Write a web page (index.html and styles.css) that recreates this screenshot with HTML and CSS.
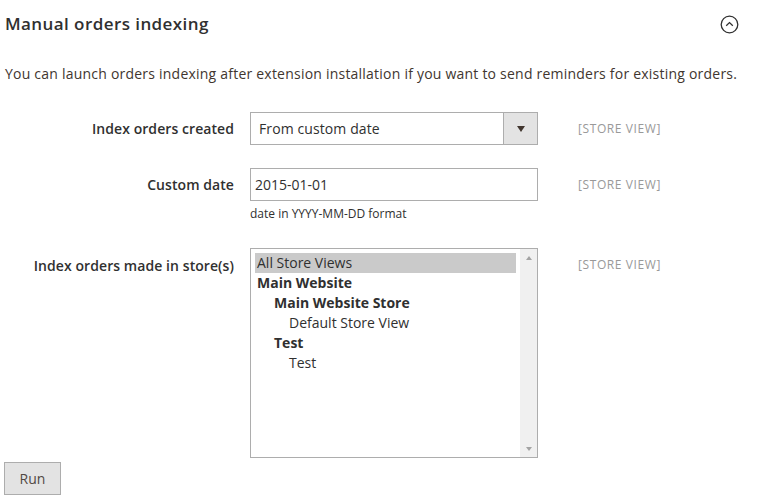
FILE: index.html
```html
<!DOCTYPE html>
<html>
<head>
<meta charset="utf-8">
<link rel="stylesheet" href="styles.css">
</head>
<body>
<div class="page">
  <div class="section-header">
    <h2 class="title">Manual orders indexing</h2>
    <span class="collapse-icon">
      <svg width="19" height="19" viewBox="0 0 19 19"><circle cx="9.5" cy="9.5" r="8.3" fill="none" stroke="#303030" stroke-width="1.3"/><path d="M6.2 10.8 L9.5 7.6 L12.8 10.8" fill="none" stroke="#303030" stroke-width="1.3"/></svg>
    </span>
  </div>
  <p class="desc">You can launch orders indexing after extension installation if you want to send reminders for existing orders.</p>

  <div class="form">
    <div class="row">
      <div class="label">Index orders created</div>
      <div class="control">
        <div class="select">
          <span class="select-value">From custom date</span>
          <span class="select-btn"><span class="tri-down"></span></span>
        </div>
      </div>
      <div class="scope">[STORE VIEW]</div>
    </div>

    <div class="row row-date">
      <div class="label">Custom date</div>
      <div class="control">
        <div class="input">2015-01-01</div>
        <div class="note">date in YYYY-MM-DD format</div>
      </div>
      <div class="scope">[STORE VIEW]</div>
    </div>

    <div class="row row-stores">
      <div class="label">Index orders made in store(s)</div>
      <div class="control">
        <div class="multiselect">
          <div class="options">
            <div class="opt selected">All Store Views</div>
            <div class="opt group">Main Website</div>
            <div class="opt group lvl1">Main Website Store</div>
            <div class="opt lvl2">Default Store View</div>
            <div class="opt group lvl1">Test</div>
            <div class="opt lvl2">Test</div>
          </div>
          <div class="scrollbar">
            <span class="sb-up"></span>
            <span class="sb-down"></span>
          </div>
        </div>
      </div>
      <div class="scope">[STORE VIEW]</div>
    </div>
  </div>

  <button class="run-btn">Run</button>
</div>
</body>
</html>
```

FILE: styles.css
```css
* { box-sizing: border-box; }
html, body { margin: 0; padding: 0; background: #fff; }
body {
  font-family: "Open Sans", "DejaVu Sans", sans-serif;
  color: #303030;
  font-size: 14px;
}
.page { width: 770px; height: 500px; overflow: hidden; }
.section-header {
  display: flex;
  justify-content: space-between;
  align-items: center;
  padding: 14px 31px 0 5px;
  height: 34px;
}
.title {
  margin: 0;
  font-size: 17px;
  font-weight: 600;
  line-height: 20px;
  letter-spacing: 0.025em;
  color: #303030;
}
.collapse-icon { display: flex; width: 19px; height: 19px; }
.desc {
  margin: 30px 0 0 5px;
  line-height: 20px;
  font-size: 14px;
  letter-spacing: 0.22px;
  color: #41362f;
  white-space: nowrap;
}
.form { margin-top: 28px; }
.row { display: flex; align-items: flex-start; }
.row-date { margin-top: 23px; }
.row-stores { margin-top: 26px; }
.label {
  width: 234px;
  margin-right: 16px;
  text-align: right;
  padding-top: 7px;
  line-height: 19px;
  font-weight: 600;
  letter-spacing: 0.07px;
  font-size: 14px;
  color: #303030;
}
.row-stores .label { padding-top: 8px; }
.control { width: 288px; }
.scope {
  margin-left: 40px;
  padding-top: 8px;
  line-height: 18px;
  font-size: 12px;
  letter-spacing: 0.6px;
  color: #999;
}
.select {
  display: flex;
  height: 33px;
  border: 1px solid #adadad;
  background: #fff;
}
.select-value {
  flex: 1;
  padding-left: 8px;
  line-height: 31px;
  letter-spacing: 0.1px;
  color: #303030;
}
.select-btn {
  width: 34px;
  border-left: 1px solid #adadad;
  background: #e3e3e3;
  display: flex;
  align-items: center;
  justify-content: center;
}
.tri-down {
  width: 0; height: 0;
  border-left: 4.5px solid transparent;
  border-right: 4.5px solid transparent;
  border-top: 6px solid #41362f;
  margin-left: 1px;
}
.input {
  height: 33px;
  border: 1px solid #adadad;
  padding-left: 4px;
  line-height: 31px;
  color: #303030;
}
.note {
  margin-top: 5px;
  font-size: 12px;
  line-height: 16px;
  color: #303030;
}
.multiselect {
  display: flex;
  height: 210px;
  border: 1px solid #adadad;
  background: #fff;
}
.options {
  flex: 1;
  padding: 4px 4px 0 4px;
}
.opt {
  height: 20px;
  line-height: 20px;
  padding-left: 2px;
  color: #303030;
}
.opt.selected { background: #cacaca; }
.opt.group { font-weight: 700; }
.lvl1 { padding-left: 19px; }
.lvl2 { padding-left: 34px; }
.scrollbar {
  width: 17px;
  background: #f0f0f0;
  display: flex;
  flex-direction: column;
  justify-content: space-between;
  align-items: center;
  padding: 7px 0 6px;
}
.sb-up, .sb-down {
  width: 0; height: 0;
  border-left: 3.5px solid transparent;
  border-right: 3.5px solid transparent;
}
.sb-up { border-bottom: 4px solid #a3a3a3; }
.sb-down { border-top: 4px solid #a3a3a3; }
.run-btn {
  display: block;
  margin: 4px 0 0 4px;
  width: 57px;
  height: 33px;
  border: 1px solid #adadad;
  background: #e3e3e3;
  font-family: "Open Sans", "DejaVu Sans", sans-serif;
  font-size: 14px;
  color: #514943;
  padding: 0;
}
```
